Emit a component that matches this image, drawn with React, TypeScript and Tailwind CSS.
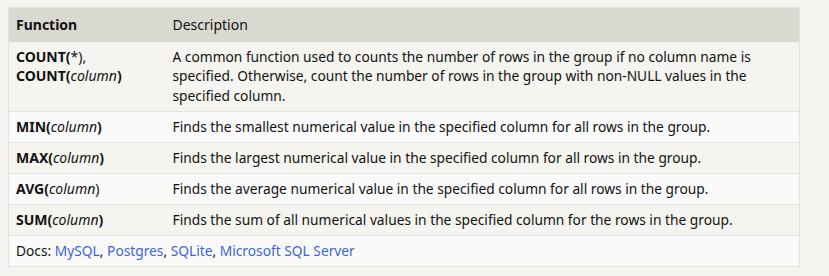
const rows = [
  {
    fn: (
      <>
        <b>COUNT(</b>*),
        <br />
        <b>COUNT(</b>
        <i>column</i>
        <b>)</b>
      </>
    ),
    desc: 'A common function used to counts the number of rows in the group if no column name is specified. Otherwise, count the number of rows in the group with non-NULL values in the specified column.',
  },
  {
    fn: (
      <>
        <b>MIN(</b>
        <i>column</i>
        <b>)</b>
      </>
    ),
    desc: 'Finds the smallest numerical value in the specified column for all rows in the group.',
  },
  {
    fn: (
      <>
        <b>MAX(</b>
        <i>column</i>
        <b>)</b>
      </>
    ),
    desc: 'Finds the largest numerical value in the specified column for all rows in the group.',
  },
  {
    fn: (
      <>
        <b>AVG(</b>
        <i>column</i>)
      </>
    ),
    desc: 'Finds the average numerical value in the specified column for all rows in the group.',
  },
  {
    fn: (
      <>
        <b>SUM(</b>
        <i>column</i>
        <b>)</b>
      </>
    ),
    desc: 'Finds the sum of all numerical values in the specified column for the rows in the group.',
  },
]

const docs = ['MySQL', 'Postgres', 'SQLite', 'Microsoft SQL Server']

export default function App() {
  return (
    <div className="min-h-[276px] w-[829px] bg-[#f5f4f0] pl-2 pt-[7px] font-['Noto_Sans',sans-serif] text-[13.75px] leading-[19.5px] text-[#121212]">
      <table className="w-[792px] border-collapse border border-[#e2e1dd]">
        <thead>
          <tr className="bg-[#dad9d0]">
            <th className="w-[157px] px-[7px] py-[7px] text-left text-[14px] font-bold">Function</th>
            <th className="px-[7px] py-[7px] text-left text-[14px] font-normal">Description</th>
          </tr>
        </thead>
        <tbody>
          {rows.map((r, i) => (
            <tr
              key={i}
              className={`border-b border-[#e2e1dd] ${i % 2 === 0 ? 'bg-[#f5f4f0]' : 'bg-[#fafafa]'}`}
            >
              <td className="px-[7px] py-[5.25px] align-top text-[14px]">{r.fn}</td>
              <td className="px-[7px] py-[5.25px] align-top">{r.desc}</td>
            </tr>
          ))}
          <tr className="bg-[#fafafa]">
            <td colSpan={2} className="px-[7px] py-[5.25px]">
              Docs:{' '}
              {docs.map((d, i) => (
                <span key={d}>
                  <a href="#" className="text-[#3e63dd]">
                    {d}
                  </a>
                  {i < docs.length - 1 ? ', ' : ''}
                </span>
              ))}
            </td>
          </tr>
        </tbody>
      </table>
    </div>
  )
}
